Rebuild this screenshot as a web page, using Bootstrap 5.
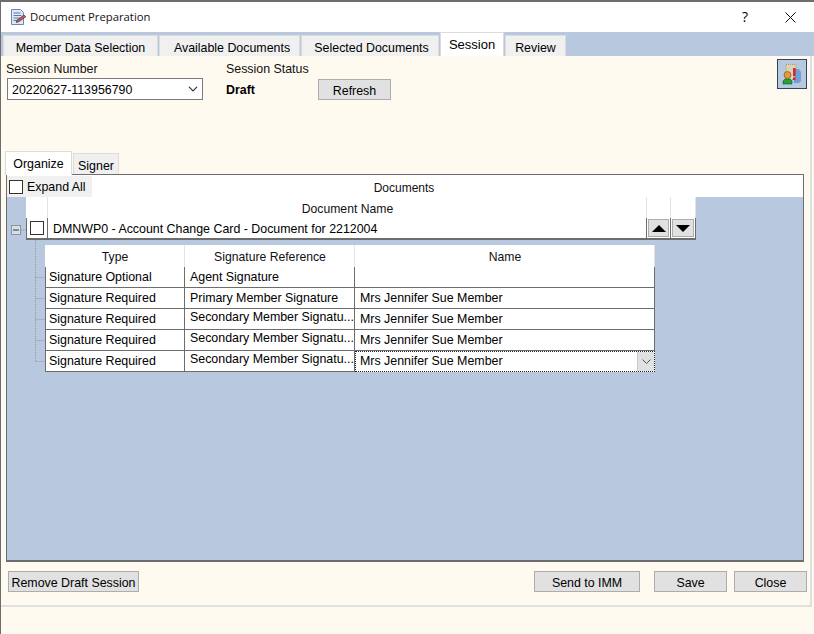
<!DOCTYPE html>
<html lang="en">
<head>
<meta charset="utf-8">
<title>Document Preparation</title>
<link href="https://cdn.jsdelivr.net/npm/bootstrap@5.3.0/dist/css/bootstrap.min.css" rel="stylesheet">
<style>
html,body{height:634px;overflow:hidden}
body{background:#fffaf0;font:12.4px/15px "Liberation Sans",Arial,sans-serif;color:#000}
.win{height:634px;border-top:2px solid #6d6d6d;border-left:1px solid #6d6d6d}
.titlebar{height:30px;background:#fff;padding-left:9px}
.titlebar .ttl{font:11.3px/16px "Open Sans",sans-serif;margin-left:3px;color:#111}
.cap-help{font:14px/16px "Open Sans",sans-serif;width:46px;text-align:center;margin-right:-1px}
.cap-close{width:46px;text-align:center;margin-right:1px}
.tabstrip{height:24px;background:#b8c9df;padding-left:2px}
.wf-tabs{border:0;flex-wrap:nowrap;gap:1px}
.wf-tabs .nav-link{border:1px solid #dcdcdc;border-bottom:0;border-radius:0;background:#f0f0f0;color:#000;padding:0;text-align:center;line-height:15px;font-size:12.4px}
.wf-tabs .nav-link.active{background:#fff;color:#000;border-color:#dcdcdc}
.tabstrip .nav-link{height:21px;margin-top:3px;padding-top:5px}
.tabstrip .nav-link.active{height:24px;margin-top:0;padding-top:4px;font-size:13px}
.w1{width:155px}.w2{width:141px}.w3{width:138px}.w4{width:64px}.w5{width:61px}
.tabstrip .nav-link.w2{padding-left:5px}
.tabstrip .nav-link.w3{padding-left:3px}
.page{height:551px;border-right:2px solid #dfe0e0;border-bottom:2px solid #dfe0e0;margin-right:2px;padding-left:1px;width:811px}
.toprow{height:95px;padding:3px 0 0 4px}
.fld-a{width:197px;margin-top:3px}
.fld-lbl{line-height:14px;color:#111}
.wf-select{width:196px;height:22px;margin:2px 0 0 1px;padding:2px 4px 0;font-size:12.4px;line-height:18px;border:1px solid #7a7a7a;border-radius:0;background-size:12px 10px;background-position:right 3px center;color:#000}
.fld-b{margin-left:23px;width:92px;margin-top:3px}
.draft{margin-top:7px}
.wf-btn{--bs-btn-bg:#e1e1e1;--bs-btn-border-color:#adadad;--bs-btn-hover-bg:#e1e1e1;--bs-btn-hover-border-color:#adadad;--bs-btn-color:#000;--bs-btn-font-size:12.4px;--bs-btn-line-height:15px;--bs-btn-padding-y:0;--bs-btn-padding-x:0;--bs-btn-border-radius:0;height:21px;white-space:nowrap;padding-top:3px}
.btn-refresh{width:73px;margin-top:20px}
.btn-alert{width:30px;height:30px;padding:0;border:1px solid #2c4560;background:#b8c9df;border-radius:0;margin:0 3px 0 0;display:flex;align-items:center;justify-content:center}
.inner-tabs{margin-left:3px;height:23px;gap:1px}
.inner-tabs .nav-link{height:21px;margin-top:2px;padding-top:5px}
.inner-tabs .nav-link.active{height:24px;margin-top:0;padding-top:5px;border-bottom:0;position:relative;z-index:1}
.i1{width:67px}.i2{width:46px}
.panel{margin-left:4px;width:798px;height:388px;background:#b8c9df;border:1px solid #6d6d6d;border-width:1px 1px 2px 1px}
.panel-head{height:22px;background:#fff}
.exp{width:85px;height:21px;margin-top:1px;background:#f0f0f0;padding:1px 0 0 2px}
.doc-title{flex:1;text-align:center;padding:4px 87px 0 0;font-size:12px;color:#111}
.form-check-input.wf-check{width:14px;height:14px;margin:0;border:1px solid #333;border-radius:0;background-color:#fff;flex:none}
.gut1{width:19px}
.table.wf-grid{--bs-table-bg:#fff;margin:0;table-layout:fixed;border-collapse:separate;border-spacing:0;background:#fff;color:#000}
.table.wf-grid>*>*>*{padding:0 4px 0 5px;border:0;font-size:12.4px;line-height:15px;vertical-align:middle;background:#fff;box-shadow:none;white-space:nowrap;overflow:hidden}
.table.wf-grid th{font-weight:400;text-align:center;font-size:12.2px;color:#111;border-right:1px solid #e3e3e3}
.table.docgrid{width:670px}
.table.docgrid th{height:21px;padding-top:3px}
.table.docgrid td{height:21px;border-bottom:2px solid #6d6d6d;border-right:1px solid #6d6d6d;padding-top:3px}
.table.docgrid td:first-child{border-left:1px solid #6d6d6d;padding:0}
.table.docgrid td.mv{padding:1px}
.c-chk{width:22px}.c-mv1{width:24px}.c-mv2{width:25px}
.mvbtn{width:100%;height:18px;background:#e1e1e1;border:1px solid #adadad;display:flex;align-items:center;justify-content:center}
.row2{margin-top:5px}
.gut2{width:38px;flex:none}
.tree-svg{margin-top:-5px}
.table.subgrid{width:610px}
.table.subgrid th{height:22px;padding-top:2px}
.table.subgrid td{height:21px;border-bottom:1px solid #6d6d6d;border-right:1px solid #6d6d6d}
.table.subgrid td:first-child{border-left:1px solid #6d6d6d;padding-left:3px}
.table.subgrid td.up{padding-bottom:3px}
.c-type{width:140px}.c-ref{width:170px}
.table.subgrid td.edit{padding:0;border:1px dotted #222}
.edit-in{height:19px;padding-left:4px;line-height:19px}
.edit-dd{width:17px;height:19px;background:#e1e1e1;border-left:1px solid #c8c8c8}
.foot{padding:9px 0 0 6px}
.f1{width:131px}.f2{width:106px;margin-right:14px}.f3{width:73px;margin-right:7px}.f4{width:73px}
.foot-right{margin-right:3px}
</style>
</head>
<body>
<div class="win d-flex flex-column">
  <div class="titlebar d-flex align-items-center">
    <svg width="17" height="18" viewBox="0 0 17 18"><path d="M1.500 1.500h9l3 3v12h-12z" fill="#dfe8f5" stroke="#6f87a8"/><path d="M3.500 5h7M3.500 7.500h8M3.500 10h6M3.500 12.500h5" stroke="#5c7aa3"/><path d="M7 12l7-5 1.800 1.800-7 5-2.600.7z" fill="#c8553d" stroke="#3a3f6b" stroke-width=".7"/></svg>
    <span class="ttl flex-grow-1">Document Preparation</span>
    <span class="cap-help">?</span>
    <span class="cap-close d-flex justify-content-center"><svg width="11" height="11" viewBox="0 0 11 11"><path d="M.5.5l10 10M10.500.5l-10 10" stroke="#111" fill="none"/></svg></span>
  </div>
  <div class="tabstrip">
    <ul class="nav nav-tabs wf-tabs">
      <li class="nav-item"><a class="nav-link w1" href="#">Member Data Selection</a></li>
      <li class="nav-item"><a class="nav-link w2" href="#">Available Documents</a></li>
      <li class="nav-item"><a class="nav-link w3" href="#">Selected Documents</a></li>
      <li class="nav-item"><a class="nav-link active w4" href="#">Session</a></li>
      <li class="nav-item"><a class="nav-link w5" href="#">Review</a></li>
    </ul>
  </div>
  <div class="page">
    <div class="toprow d-flex align-items-start">
      <div class="fld-a">
        <div class="fld-lbl">Session Number</div>
        <select class="form-select wf-select"><option>20220627-113956790</option></select>
      </div>
      <div class="fld-b">
        <div class="fld-lbl">Session Status</div>
        <div class="draft fw-bold">Draft</div>
      </div>
      <button class="btn wf-btn btn-refresh" type="button">Refresh</button>
      <button class="btn-alert ms-auto" type="button" aria-label="Alerts">
        <svg width="20" height="22" viewBox="0 0 20 22"><rect x="4" y="1.500" width="10" height="15" fill="#d8d4b8" stroke="#b39a52" stroke-dasharray="1 1"/><path d="M12 6h5l2 3v9l-2 2h-5z" fill="#6f9fd6"/><circle cx="5.500" cy="12" r="3.500" fill="#e39a3b" stroke="#7a4a12" stroke-width=".6"/><path d="M1 21v-3l2-2h5l2 2v3z" fill="#27a03a" stroke="#0e5a1c" stroke-width=".6"/><rect x="11" y="5" width="2.600" height="8" fill="#d8262c"/><rect x="11" y="14.500" width="2.600" height="2.600" fill="#d8262c"/></svg>
      </button>
    </div>
    <ul class="nav nav-tabs wf-tabs inner-tabs">
      <li class="nav-item"><a class="nav-link active i1" href="#">Organize</a></li>
      <li class="nav-item"><a class="nav-link i2" href="#">Signer</a></li>
    </ul>
    <div class="panel">
      <div class="panel-head d-flex">
        <label class="exp d-flex align-items-center gap-1"><input class="form-check-input wf-check" type="checkbox"><span>Expand All</span></label>
        <div class="doc-title align-self-center">Documents</div>
      </div>
      <div class="d-flex">
        <div class="gut1 d-flex align-items-end">
          <svg width="19" height="21" viewBox="0 0 19 21"><rect x="4.500" y="6.500" width="9" height="9" fill="#d9dfe9" stroke="#8a93a3"/><path d="M6 11h6" stroke="#333"/><path d="M14 11h5" stroke="#8a93a3" stroke-dasharray="1 1"/></svg>
        </div>
        <table class="table wf-grid docgrid">
          <colgroup><col class="c-chk"><col><col class="c-mv1"><col class="c-mv2"></colgroup>
          <thead><tr><th></th><th>Document Name</th><th></th><th></th></tr></thead>
          <tbody><tr>
            <td><input class="form-check-input wf-check d-block mx-auto" type="checkbox" aria-label="Select"></td>
            <td>DMNWP0 - Account Change Card - Document for 2212004</td>
            <td class="mv"><div class="mvbtn"><svg width="14" height="7" viewBox="0 0 14 7"><path d="M7 0l7 7H0z" fill="#000"/></svg></div></td>
            <td class="mv"><div class="mvbtn"><svg width="14" height="7" viewBox="0 0 14 7"><path d="M7 7L0 0h14z" fill="#000"/></svg></div></td>
          </tr></tbody>
        </table>
      </div>
      <div class="d-flex row2">
        <div class="gut2 d-flex align-items-start">
          <svg class="tree-svg" width="38" height="127" viewBox="0 0 38 127"><path d="M28.500 0V121.500M28.500 37.500H38M28.500 58.500H38M28.500 79.500H38M28.500 100.500H38M28.500 121.500H38" stroke="#999" stroke-dasharray="1 1" fill="none"/></svg>
        </div>
        <table class="table wf-grid subgrid">
          <colgroup><col class="c-type"><col class="c-ref"><col></colgroup>
          <thead><tr><th>Type</th><th>Signature Reference</th><th>Name</th></tr></thead>
          <tbody>
            <tr><td>Signature Optional</td><td>Agent Signature</td><td></td></tr>
            <tr><td>Signature Required</td><td>Primary Member Signature</td><td>Mrs Jennifer Sue Member</td></tr>
            <tr><td>Signature Required</td><td class="up">Secondary Member Signatu...</td><td>Mrs Jennifer Sue Member</td></tr>
            <tr><td>Signature Required</td><td class="up">Secondary Member Signatu...</td><td>Mrs Jennifer Sue Member</td></tr>
            <tr><td>Signature Required</td><td class="up">Secondary Member Signatu...</td>
              <td class="edit"><div class="d-flex align-items-center"><span class="edit-in flex-grow-1">Mrs Jennifer Sue Member</span><span class="edit-dd d-flex align-items-center justify-content-center"><svg width="9" height="5" viewBox="0 0 9 5"><path d="M.5.500l4 4 4-4" stroke="#555" fill="none"/></svg></span></div></td></tr>
          </tbody>
        </table>
      </div>
    </div>
    <div class="foot d-flex">
      <button class="btn wf-btn f1" type="button">Remove Draft Session</button>
      <div class="ms-auto d-flex foot-right">
        <button class="btn wf-btn f2" type="button">Send to IMM</button>
        <button class="btn wf-btn f3" type="button">Save</button>
        <button class="btn wf-btn f4" type="button">Close</button>
      </div>
    </div>
  </div>
</div>
<script src="https://cdn.jsdelivr.net/npm/bootstrap@5.3.0/dist/js/bootstrap.bundle.min.js"></script>
</body>
</html>
